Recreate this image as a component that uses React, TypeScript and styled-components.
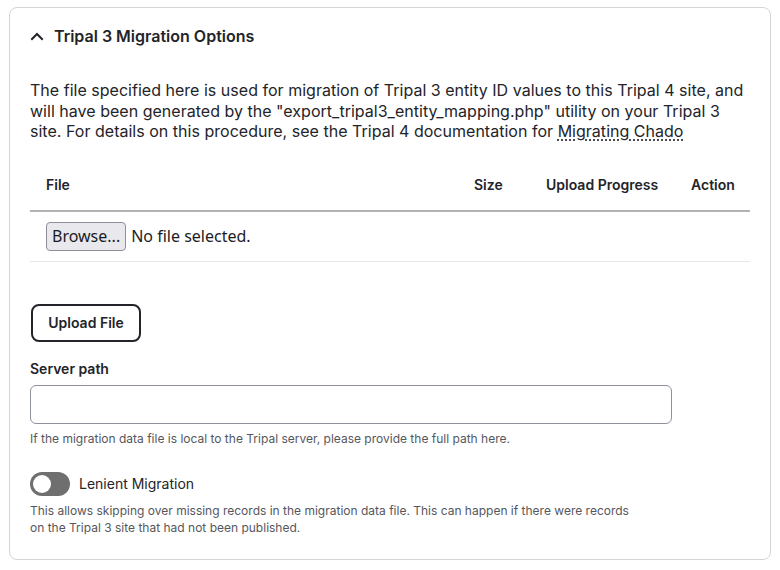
import React from "react";
import styled, { createGlobalStyle } from "styled-components";

const Global = createGlobalStyle`
  html, body { margin: 0; padding: 0; background: #fff; }
  body { font-family: Inter, "Noto Sans", sans-serif; color: #232429; }
  * { box-sizing: border-box; }
`;

const Card = styled.details`
  margin: 7px 0 0 9px;
  width: 762px;
  height: 553px;
  border: 1px solid #d4d4d8;
  border-radius: 8px;
  background: #fff;
`;

const Summary = styled.summary`
  list-style: none;
  display: flex;
  align-items: center;
  gap: 10px;
  padding: 16px 20px 16px 20px;
  font-size: 16px;
  font-weight: 600;
  line-height: 24px;
  cursor: pointer;
  &::-webkit-details-marker { display: none; }
`;

const Body = styled.div`
  padding: 16px 20px 0 20px;
  display: flex;
  flex-direction: column;
`;

const Intro = styled.p`
  margin: 0;
  font-size: 16px;
  line-height: 20.5px;
  letter-spacing: 0.02px;
`;

const Abbr = styled.a`
  color: inherit;
  text-decoration: underline dotted;
  text-underline-offset: 3px;
`;

const Table = styled.div`
  margin-top: 18px;
  display: flex;
  flex-direction: column;
`;

const Row = styled.div<{ $head?: boolean }>`
  display: grid;
  grid-template-columns: 1fr 72px 145px 75px;
  align-items: center;
  border-bottom: ${(p) => (p.$head ? "2px solid #b3b3b3" : "1px solid #e6e6e6")};
  height: ${(p) => (p.$head ? "52px" : "50px")};
`;

const HeadCell = styled.div`
  padding: 0 16px;
  font-size: 14px;
  font-weight: 600;
  line-height: 18px;
`;

const Cell = styled.div`
  padding: 0 16px;
  display: flex;
  align-items: center;
  gap: 5px;
`;

const BrowseButton = styled.button`
  font-family: "Noto Sans", "DejaVu Sans", sans-serif;
  font-size: 16px;
  color: #1b1b1f;
  background: #e9e9ed;
  border: 1px solid #8f8f9d;
  border-radius: 4px;
  height: 29px;
  padding: 0 5px;
`;

const NoFile = styled.span`
  font-family: "Noto Sans", "DejaVu Sans", sans-serif;
  font-size: 16px;
  color: #1b1b1f;
`;

const UploadButton = styled.button`
  margin-top: 42px;
  align-self: flex-start;
  width: 110px;
  height: 38px;
  border: 2px solid #232429;
  border-radius: 8px;
  background: #fff;
  font-family: Inter, sans-serif;
  font-size: 14px;
  font-weight: 600;
  color: #232429;
  margin-left: 1px;
`;

const Label = styled.label`
  margin-top: 18px;
  font-size: 14px;
  font-weight: 600;
  line-height: 18px;
`;

const TextInput = styled.input`
  margin-top: 7px;
  width: 642px;
  height: 39px;
  border: 1px solid #8e929c;
  border-radius: 6px;
  background: #fff;
`;

const Help = styled.div<{ $width?: number }>`
  margin-top: 6px;
  font-size: 12px;
  line-height: 17px;
  color: #55575d;
  max-width: ${(p) => (p.$width ? `${p.$width}px` : "none")};
`;

const ToggleRow = styled.div`
  margin-top: 25px;
  display: flex;
  align-items: center;
  gap: 9px;
`;

const Track = styled.span`
  width: 40px;
  height: 24px;
  border-radius: 12px;
  background: #6f6f6f;
  padding: 3px;
  display: flex;
  align-items: center;
`;

const Knob = styled.span`
  width: 18px;
  height: 18px;
  border-radius: 50%;
  background: #fff;
`;

const ToggleLabel = styled.span`
  font-size: 14px;
  line-height: 18px;
`;

export default function App() {
  return (
    <>
      <Global />
      <Card open>
        <Summary>
          <svg width="14" height="14" viewBox="0 0 14 14" fill="none">
            <path d="M2 10 L7 5 L12 10" stroke="#232429" strokeWidth="2" strokeLinecap="square" />
          </svg>
          Tripal 3 Migration Options
        </Summary>
        <Body>
          <Intro>
            The file specified here is used for migration of Tripal 3 entity ID values to this Tripal 4 site, and
            will have been generated by the "export_tripal3_entity_mapping.php" utility on your Tripal 3
            site. For details on this procedure, see the Tripal 4 documentation for <Abbr href="#">Migrating Chado</Abbr>
          </Intro>
          <Table>
            <Row $head>
              <HeadCell>File</HeadCell>
              <HeadCell>Size</HeadCell>
              <HeadCell>Upload Progress</HeadCell>
              <HeadCell>Action</HeadCell>
            </Row>
            <Row>
              <Cell>
                <BrowseButton>Browse...</BrowseButton>
                <NoFile>No file selected.</NoFile>
              </Cell>
              <Cell />
              <Cell />
              <Cell />
            </Row>
          </Table>
          <UploadButton>Upload File</UploadButton>
          <Label>Server path</Label>
          <TextInput type="text" />
          <Help>If the migration data file is local to the Tripal server, please provide the full path here.</Help>
          <ToggleRow>
            <Track>
              <Knob />
            </Track>
            <ToggleLabel>Lenient Migration</ToggleLabel>
          </ToggleRow>
          <Help $width={600}>
            This allows skipping over missing records in the migration data file. This can happen if there were records
            on the Tripal 3 site that had not been published.
          </Help>
        </Body>
      </Card>
    </>
  );
}
